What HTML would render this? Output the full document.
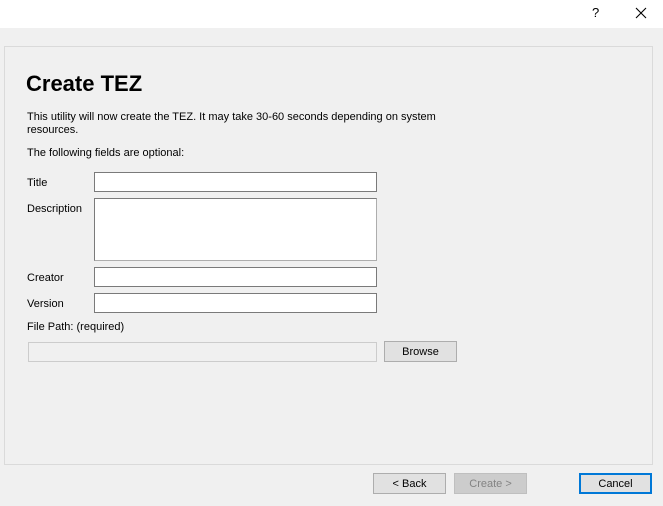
<!DOCTYPE html>
<html><head><style>
body{margin:0;width:663px;height:506px;background:#f0f0f0;font-family:"Liberation Sans",Arial,sans-serif;font-size:11px;color:#000;position:relative;overflow:hidden}
.a{position:absolute}
.tb{left:0;top:0;width:663px;height:28px;background:#fff}
.panel{left:4px;top:46px;width:647px;height:417px;border:1px solid #dadada;background:#f0f0f0}
.in{background:#fff;border:1px solid #7a7a7a;box-sizing:border-box}
.btn{background:#e1e1e1;border:1px solid #adadad;box-sizing:border-box;text-align:center;line-height:20px;font-size:11px}
</style></head><body>
<div class="a tb"></div>
<div class="a" style="left:592px;top:5px;font-size:13px">?</div>
<svg class="a" style="left:635px;top:7px" width="12" height="12"><path d="M1 1L11 11M11 1L1 11" stroke="#000" stroke-width="1.1"/></svg>
<div class="a panel"></div>
<div class="a" style="left:26px;top:71px;font-size:22px;font-weight:bold">Create TEZ</div>
<div class="a" style="left:27px;top:111px;line-height:13px;width:430px">This utility will now create the TEZ. It may take 30-60 seconds depending on system resources.</div>
<div class="a" style="left:27px;top:147px">The following fields are optional:</div>
<div class="a" style="left:27px;top:177px">Title</div>
<div class="a in" style="left:94px;top:172px;width:283px;height:20px"></div>
<div class="a" style="left:27px;top:203px">Description</div>
<div class="a in" style="left:94px;top:198px;width:283px;height:63px;border-color:#adadad;border-top-color:#7a7a7a;border-left-color:#7a7a7a"></div>
<div class="a" style="left:27px;top:272px">Creator</div>
<div class="a in" style="left:94px;top:267px;width:283px;height:20px"></div>
<div class="a" style="left:27px;top:298px">Version</div>
<div class="a in" style="left:94px;top:293px;width:283px;height:20px"></div>
<div class="a" style="left:27px;top:321px">File Path: (required)</div>
<div class="a" style="left:28px;top:342px;width:349px;height:20px;background:#f0f0f0;border:1px solid #ccc;box-sizing:border-box"></div>
<div class="a btn" style="left:384px;top:341px;width:73px;height:21px">Browse</div>
<div class="a btn" style="left:373px;top:473px;width:73px;height:21px">&lt; Back</div>
<div class="a btn" style="left:454px;top:473px;width:73px;height:21px;background:#cccccc;border-color:#bfbfbf;color:#838383">Create &gt;</div>
<div class="a btn" style="left:579px;top:473px;width:73px;height:21px;border:2px solid #0078d7;line-height:18px">Cancel</div>
</body></html>
